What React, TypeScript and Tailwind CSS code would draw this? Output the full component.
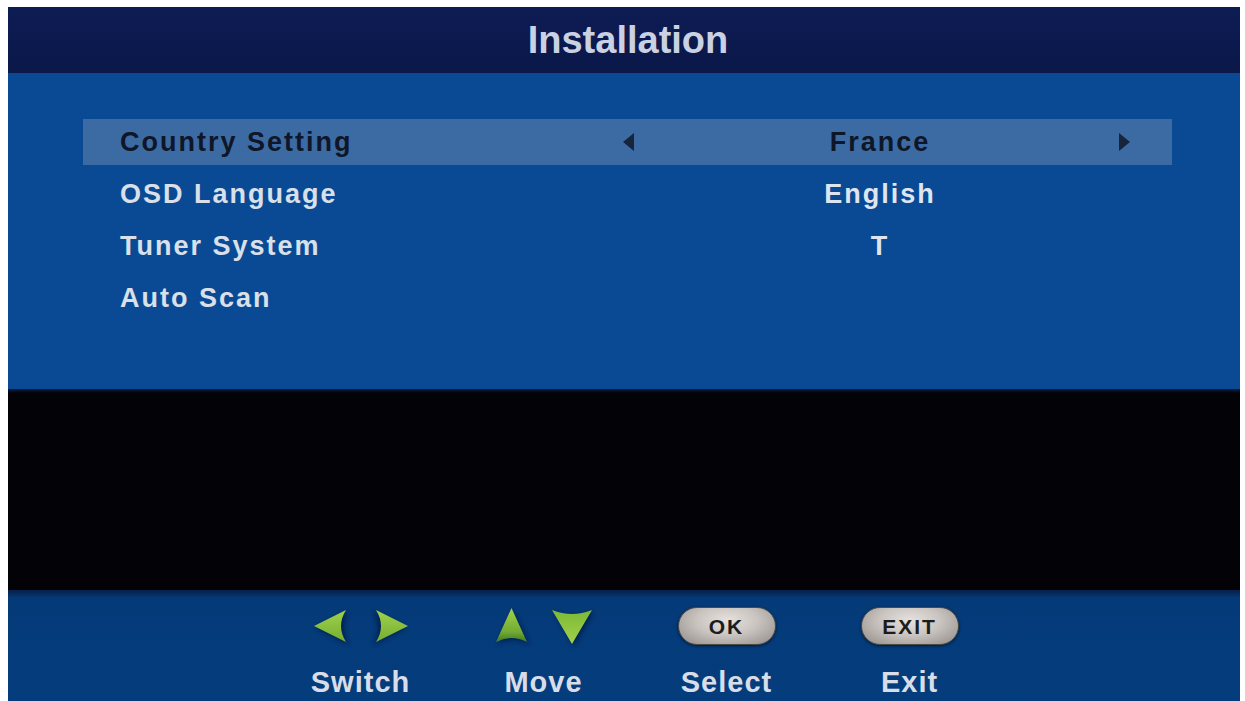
import React from 'react';

type Row = { label: string; value: string; active?: boolean };

const rows: Row[] = [
  { label: 'Country Setting', value: 'France', active: true },
  { label: 'OSD Language', value: 'English' },
  { label: 'Tuner System', value: 'T' },
  { label: 'Auto Scan', value: '' },
];

const font = { fontFamily: '"Liberation Sans", Arial, sans-serif' };

const SwitchIcon = () => (
  <svg width="94" height="38" viewBox="0 0 94 38" overflow="visible">
    <defs>
      <filter id="sblur" x="-40%" y="-40%" width="180%" height="180%">
        <feGaussianBlur stdDeviation="2.5" />
      </filter>
      <linearGradient id="sg" x1="0" y1="0" x2="0" y2="1">
        <stop offset="0" stopColor="#9fd14a" />
        <stop offset="1" stopColor="#76ad33" />
      </linearGradient>
    </defs>
    <path d="M2 21 L35 4 Q25 21 35 38 Z" fill="#04214d" filter="url(#sblur)" />
    <path d="M92 21 L59 4 Q69 21 59 38 Z" fill="#04214d" filter="url(#sblur)" />
    <path d="M0 19 L32 3 Q22 19 32 35 Z" fill="url(#sg)" />
    <path d="M94 19 L62 3 Q72 19 62 35 Z" fill="url(#sg)" />
  </svg>
);

const MoveIcon = () => (
  <svg width="96" height="40" viewBox="0 0 96 40" overflow="visible">
    <defs>
      <filter id="mblur" x="-40%" y="-40%" width="180%" height="180%">
        <feGaussianBlur stdDeviation="2.5" />
      </filter>
      <linearGradient id="mg" x1="0" y1="0" x2="0" y2="1">
        <stop offset="0" stopColor="#a0d24a" />
        <stop offset="0.7" stopColor="#73ab33" />
        <stop offset="1" stopColor="#3f7a22" />
      </linearGradient>
      <linearGradient id="dg" x1="0" y1="0" x2="0" y2="1">
        <stop offset="0" stopColor="#7db838" />
        <stop offset="1" stopColor="#a0d24a" />
      </linearGradient>
    </defs>
    <path d="M17.5 4 L33 38 Q17.5 30 2 38 Z" fill="#04214d" filter="url(#mblur)" />
    <path d="M58 6 Q78 14 98 6 L78 40 Z" fill="#04214d" filter="url(#mblur)" />
    <path d="M15.5 2 L31 36 Q15.5 28 0 36 Z" fill="url(#mg)" />
    <path d="M56 4 Q76 12 96 4 L76 38 Z" fill="url(#dg)" />
  </svg>
);

const Pill = ({ text }: { text: string }) => (
  <div className="flex h-[38px] w-[98px] items-center justify-center rounded-full border border-[#4d4a48] bg-[radial-gradient(ellipse_at_50%_35%,#e6e2de_0%,#c9c4bf_45%,#8f8a85_100%)] shadow-[0_1px_3px_rgba(0,0,0,0.6)]">
    <span className="text-[21px] font-bold leading-none tracking-[2px] text-[#1c1c1c]" style={font}>
      {text}
    </span>
  </div>
);

const hints = [
  { icon: <SwitchIcon />, label: 'Switch' },
  { icon: <MoveIcon />, label: 'Move' },
  { icon: <Pill text="OK" />, label: 'Select' },
  { icon: <Pill text="EXIT" />, label: 'Exit' },
];

export default function App() {
  return (
    <div className="h-[701px] w-[1245px] overflow-hidden bg-white pl-[8px] pr-[5px] pt-[7px]" style={font}>
      <div className="flex h-[694px] flex-col">
        {/* Header */}
        <div className="flex h-[66px] items-center justify-center bg-[linear-gradient(to_bottom,#0e1c55,#0a1748)] pl-[8px]">
          <h1 className="text-[38px] font-bold leading-none text-[#c9d1e2]">Installation</h1>
        </div>

        {/* Menu */}
        <div className="h-[316px] bg-[#0a4a95] pl-[75px] pt-[46px]">
          <div className="flex w-[1089px] flex-col gap-[6px]">
            {rows.map((row) => (
              <div
                key={row.label}
                className={`flex h-[46px] items-center ${row.active ? 'bg-[#3c6ba3]' : ''}`}
              >
                <div
                  className={`w-[520px] pl-[37px] text-[27px] font-bold leading-none tracking-[2px] ${
                    row.active ? 'text-[#0e1628]' : 'text-[#d9e0ea]'
                  }`}
                >
                  {row.label}
                </div>
                <div className="flex w-[50px] justify-center">
                  {row.active && (
                    <div className="h-0 w-0 border-y-[9px] border-r-[11px] border-y-transparent border-r-[#16243c]" />
                  )}
                </div>
                <div
                  className={`w-[454px] text-center text-[27px] font-bold leading-none tracking-[2px] ${
                    row.active ? 'text-[#0e1628]' : 'text-[#dfe5ee]'
                  }`}
                >
                  {row.value}
                </div>
                <div className="flex w-[34px] justify-center">
                  {row.active && (
                    <div className="h-0 w-0 border-y-[9px] border-l-[11px] border-y-transparent border-l-[#16243c]" />
                  )}
                </div>
              </div>
            ))}
          </div>
        </div>

        {/* Video area */}
        <div className="h-[201px] bg-[linear-gradient(to_bottom,#0a1e40_0px,#020207_4px,#020207_100%)]" />

        {/* Footer hints */}
        <div className="flex h-[111px] bg-[linear-gradient(to_bottom,#071f45_0px,#053a78_8px,#043d7d_100%)] pl-[261px] pt-[17px]">
          {hints.map((h) => (
            <div key={h.label} className="flex w-[183px] flex-col items-center">
              <div className="flex h-[38px] items-center justify-center">{h.icon}</div>
              <div className="mt-[23px] text-[29px] font-bold leading-none tracking-[1px] text-[#d8dee9]">
                {h.label}
              </div>
            </div>
          ))}
        </div>
      </div>
    </div>
  );
}
